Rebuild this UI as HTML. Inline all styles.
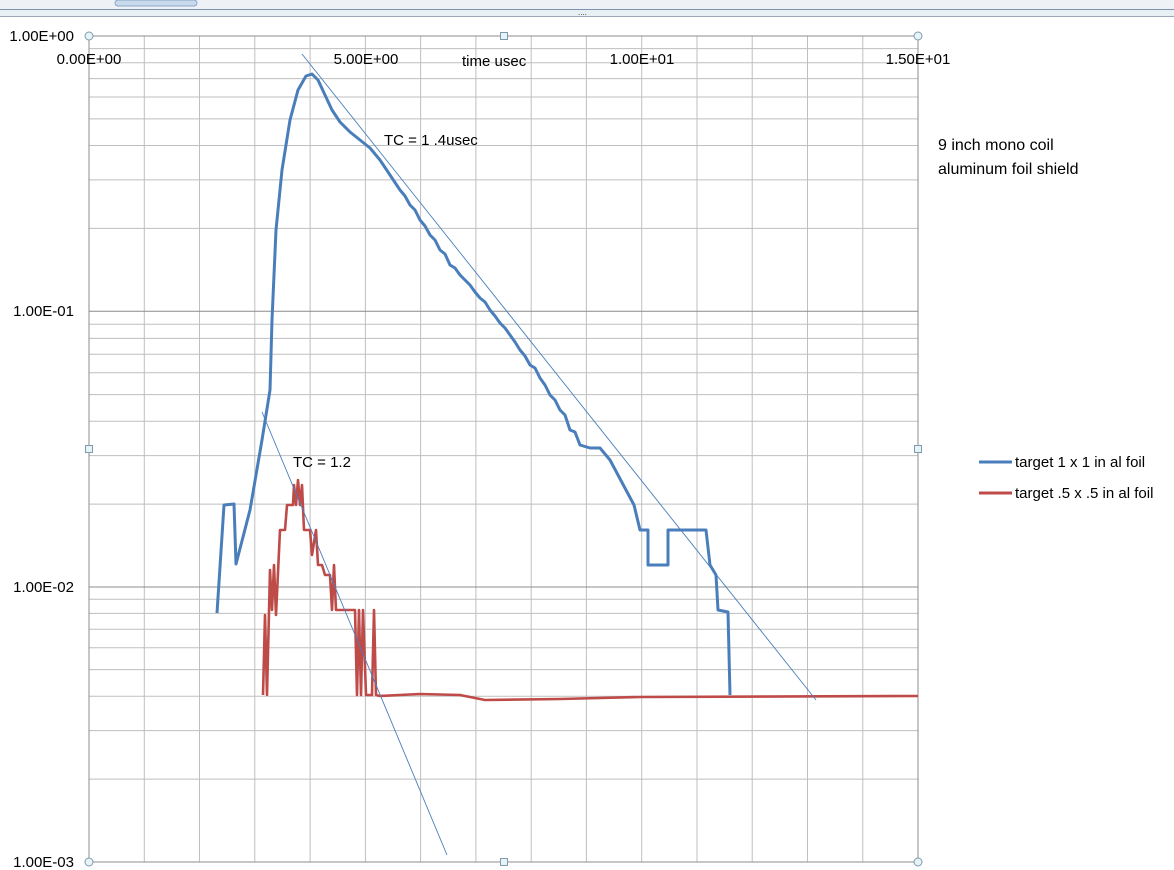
<!DOCTYPE html>
<html><head><meta charset="utf-8"><style>
body{margin:0;width:1174px;height:870px;background:#fff;overflow:hidden;font-family:"Liberation Sans",sans-serif}
svg{position:absolute;left:0;top:0}
</style></head><body>
<svg width="1174" height="870" xmlns="http://www.w3.org/2000/svg" font-family="Liberation Sans, sans-serif" font-size="15">
<rect x="0" y="0" width="1174" height="10" fill="#eef2f7"/>
<rect x="115" y="0" width="82" height="6" rx="3" fill="#c9d9ec" stroke="#8aa5c8"/>
<line x1="0" y1="9.5" x2="1174" y2="9.5" stroke="#7c93b0"/>
<rect x="0" y="10" width="1174" height="6" fill="#e9f0f4"/>
<line x1="0" y1="16.5" x2="1174" y2="16.5" stroke="#9aa8b8"/>
<text x="578" y="15" font-size="8" fill="#333">....</text>
<g stroke="#bfbfbf" stroke-width="1">
<path d="M89 48.6H918M89 62.7H918M89 78.6H918M89 97H918M89 118.9H918M89 145.5H918M89 179.9H918M89 228.4H918M89 324.3H918M89 338.4H918M89 354.3H918M89 372.7H918M89 394.6H918M89 421.2H918M89 455.6H918M89 504.1H918M89 599.3H918M89 613.4H918M89 629.3H918M89 647.7H918M89 669.6H918M89 696.2H918M89 730.6H918M89 779.1H918"/>
<path d="M144.3 36V862M199.5 36V862M254.8 36V862M310.1 36V862M365.4 36V862M420.6 36V862M475.9 36V862M531.2 36V862M586.4 36V862M641.7 36V862M697 36V862M752.2 36V862M807.5 36V862M862.8 36V862"/>
</g>
<g stroke="#8c8c8c" stroke-width="1">
<path d="M89 36H918M89 311.3H918M89 587H918M89 862H918"/>
<path d="M89 36V862M918 36V862"/>
</g>
<g fill="#000">
<text x="74" y="41" text-anchor="end">1.00E+00</text>
<text x="74" y="316" text-anchor="end">1.00E-01</text>
<text x="74" y="592" text-anchor="end">1.00E-02</text>
<text x="74" y="867" text-anchor="end">1.00E-03</text>
<text x="89" y="64" text-anchor="middle">0.00E+00</text>
<text x="366" y="64" text-anchor="middle">5.00E+00</text>
<text x="642" y="64" text-anchor="middle">1.00E+01</text>
<text x="918" y="64" text-anchor="middle">1.50E+01</text>
<text x="462" y="66">time usec</text>
<text x="384" y="145">TC = 1 .4usec</text>
<text x="293" y="467">TC = 1.2</text>
<text x="938" y="150" font-size="16">9 inch mono coil</text>
<text x="938" y="174" font-size="16">aluminum foil shield</text>
<text x="1015" y="467">target 1 x 1 in al foil</text>
<text x="1015" y="498">target .5 x .5 in al foil</text>
</g>
<line x1="979" y1="462" x2="1012" y2="462" stroke="#4a7ebb" stroke-width="3"/>
<line x1="979" y1="493" x2="1012" y2="493" stroke="#be4b48" stroke-width="3"/>
<path fill="none" stroke="#be4b48" stroke-width="2.6" stroke-linejoin="round" d="M263 695L265 615L267 695L270 570L272 610L274 565L276 615L280 530L285 530L287 505L293 505L294 485L296 505L298 480L300 505L302 485L304 530L310 530L312 555L316 530L318 565L322 565L325 575L330 575L332 610L334 565L336 610L355 610L357 695L359 610L361 695L363 610L366 695L372 695L374 610L376 695L380 696L420 694L460 695L485 700L560 699L640 697L918 696"/>
<path fill="none" stroke="#4a7ebb" stroke-width="3" stroke-linejoin="round" d="M217 613L224 505L234 504L236 564L250 510L262 440L270 390L272 320L276 230L282 170L290 120L298 90L306 76L312 74L318 80L325 95L332 110L340 122L350 132L360 140L370 148L380 160L390 175L400 190L405 196L410 205L415 210L420 220L425 226L430 235L435 240L440 250L445 254L450 265L455 268L460 275L465 280L470 285L475 292L480 298L485 302L490 310L495 316L500 323L505 328L510 335L515 342L520 350L525 356L530 365L535 368L540 378L545 385L550 395L555 400L560 410L565 415L570 430L575 432L580 445L590 448L600 448L610 460L618 475L626 490L634 505L640 530L648 530L648 565L668 565L668 530L706 530L710 565L716 575L718 610L728 612L730 695"/>
<g stroke="#4a7ebb" stroke-width="0.9">
<line x1="302" y1="54" x2="816" y2="700"/>
<line x1="262" y1="412" x2="447" y2="855"/>
</g>
<g fill="#e6f4f7" stroke="#7f9aab">
<circle cx="89" cy="36" r="4"/><circle cx="918" cy="36" r="4"/><circle cx="89" cy="862" r="4"/><circle cx="918" cy="862" r="4"/>
<rect x="500.5" y="32.5" width="7" height="7"/><rect x="85.5" y="445.5" width="7" height="7"/><rect x="914.5" y="445.5" width="7" height="7"/><rect x="500.5" y="858.5" width="7" height="7"/>
</g>
</svg>
</body></html>
